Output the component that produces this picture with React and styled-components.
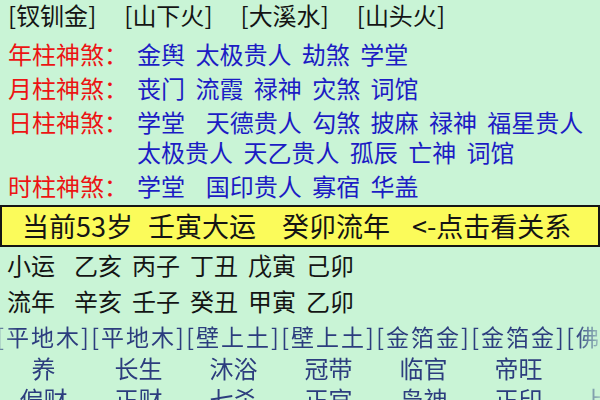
import React from "react";
import styled, { createGlobalStyle } from "styled-components";

const GlobalStyle = createGlobalStyle`
  html, body {
    margin: 0;
    padding: 0;
  }
  body {
    background: #c9f4d6;
    font-family: "Noto Sans CJK SC", "Noto Sans", sans-serif;
    overflow: hidden;
  }
`;

const nayin = ["钗钏金", "山下火", "大溪水", "山头火"];

const shensha = [
  { pillar: "年柱神煞", stars: "金舆 太极贵人 劫煞 学堂" },
  { pillar: "月柱神煞", stars: "丧门 流霞 禄神 灾煞 词馆" },
  { pillar: "日柱神煞", stars: "学堂  天德贵人 勾煞 披麻 禄神 福星贵人 太极贵人 天乙贵人 孤辰 亡神 词馆" },
  { pillar: "时柱神煞", stars: "学堂  国印贵人 寡宿 华盖" },
];

const luck = [
  { text: "当前53岁", space: 0 },
  { text: "壬寅大运", space: 15 },
  { text: "癸卯流年", space: 26 },
  { text: "<-点击看关系", space: 22 },
];

const years = [
  { label: "小运", items: ["乙亥", "丙子", "丁丑", "戊寅", "己卯"] },
  { label: "流年", items: ["辛亥", "壬子", "癸丑", "甲寅", "乙卯"] },
];

const columns = [
  { nayin: "平地木", stage: "养", god: "偏财" },
  { nayin: "平地木", stage: "长生", god: "正财" },
  { nayin: "壁上土", stage: "沐浴", god: "七杀" },
  { nayin: "壁上土", stage: "冠带", god: "正官" },
  { nayin: "金箔金", stage: "临官", god: "枭神" },
  { nayin: "金箔金", stage: "帝旺", god: "正印" },
  { nayin: "佛灯火", stage: "衰", god: "比肩" },
];

const Page = styled.div`
  width: 600px;
  height: 400px;
  overflow: hidden;
`;

const Top = styled.div`
  padding-left: 8px;
`;

const NayinRow = styled.div`
  display: flex;
  gap: 28px;
  font-size: 24px;
  line-height: 30px;
  color: #141414;
`;

const ShenshaRow = styled.div`
  display: flex;
  font-size: 24px;
  line-height: 30px;
  margin-top: ${(p) => (p.first ? 9 : 4)}px;
`;

const Pillar = styled.div`
  flex: none;
  width: 129px;
  color: #ec1414;
`;

const Stars = styled.div`
  flex: 1;
  color: #1c1cc4;
  white-space: pre-wrap;
  word-spacing: 5px;
`;

const LuckBar = styled.div`
  margin-top: 4px;
  height: 38px;
  border: 2px solid #151515;
  background: #fbfb5a;
  display: flex;
  align-items: center;
  padding-left: 20px;
  font-size: 27px;
  line-height: 38px;
  color: #141414;
`;

const LuckItem = styled.span`
  margin-left: ${(p) => p.space}px;
  white-space: nowrap;
`;

const YearRow = styled.div`
  display: flex;
  gap: 10px;
  padding-left: 7px;
  font-size: 24px;
  line-height: 36px;
  color: #141414;
`;

const YearLabel = styled.span`
  margin-right: 9px;
`;

const Scroller = styled.div`
  width: 600px;
  overflow: hidden;
  -webkit-mask-image: linear-gradient(to right, rgba(0, 0, 0, 0.6) 0, #000 18px, #000 576px, rgba(0, 0, 0, 0.25) 600px);
  mask-image: linear-gradient(to right, rgba(0, 0, 0, 0.6) 0, #000 18px, #000 576px, rgba(0, 0, 0, 0.25) 600px);
`;

const Table = styled.div`
  display: grid;
  grid-template-columns: repeat(7, 95px);
  margin-left: -4px;
  color: #2c3d7e;
`;

const Cell = styled.div`
  text-align: center;
  white-space: nowrap;
  font-size: ${(p) => (p.bracket ? 23 : 24)}px;
  letter-spacing: ${(p) => (p.bracket ? 2 : 0)}px;
  line-height: ${(p) => p.h}px;
`;

export default function App() {
  return (
    <Page>
      <GlobalStyle />
      <Top>
        <NayinRow>
          {nayin.map((n, i) => (
            <span key={i}>[{n}]</span>
          ))}
        </NayinRow>
        {shensha.map((row, i) => (
          <ShenshaRow key={row.pillar} first={i === 0}>
            <Pillar>{row.pillar}：</Pillar>
            <Stars>{row.stars}</Stars>
          </ShenshaRow>
        ))}
      </Top>

      <LuckBar>
        {luck.map((l) => (
          <LuckItem key={l.text} space={l.space}>
            {l.text}
          </LuckItem>
        ))}
      </LuckBar>

      {years.map((row) => (
        <YearRow key={row.label}>
          <YearLabel>{row.label}</YearLabel>
          {row.items.map((it) => (
            <span key={it}>{it}</span>
          ))}
        </YearRow>
      ))}

      <Scroller>
        <Table>
          {columns.map((c, i) => (
            <Cell key={"n" + i} bracket h={34}>
              [{c.nayin}]
            </Cell>
          ))}
          {columns.map((c, i) => (
            <Cell key={"s" + i} h={30}>
              {c.stage}
            </Cell>
          ))}
          {columns.map((c, i) => (
            <Cell key={"g" + i} h={32}>
              {c.god}
            </Cell>
          ))}
        </Table>
      </Scroller>
    </Page>
  );
}
